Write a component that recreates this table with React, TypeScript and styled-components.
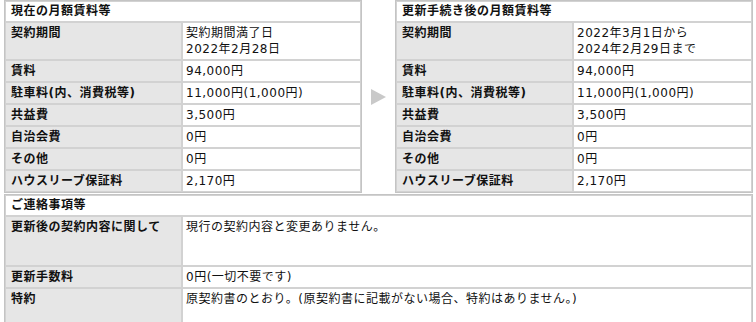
import React from 'react'
import styled, { createGlobalStyle } from 'styled-components'

const GlobalStyle = createGlobalStyle`
  html, body {
    margin: 0;
    padding: 0;
    background: #ffffff;
  }
  body {
    font-family: "DejaVu Sans", "Noto Sans CJK JP", sans-serif;
    font-size: 12px;
    color: #111111;
  }
`

const Page = styled.div`
  width: 756px;
  padding: 0 3px 0 4px;
  box-sizing: border-box;
  display: flex;
  flex-direction: column;
  gap: 1px;
`

const CompareRow = styled.div`
  display: flex;
  align-items: center;
  justify-content: space-between;
`

const Arrow = styled.div`
  width: 0;
  height: 0;
  border-top: 8px solid transparent;
  border-bottom: 8px solid transparent;
  border-left: 15px solid #c9c9c9;
  margin: 0 9px 0 9px;
`

const Table = styled.table<{ $width: string }>`
  width: ${p => p.$width};
  border-collapse: separate;
  border-spacing: 0;
  border: 1px solid #c4c4c4;
  table-layout: fixed;
`

const LabelCol = styled.col`
  width: 177px;
`

const HeadCell = styled.th`
  text-align: left;
  font-weight: 700;
  background: #ffffff;
  border: 1px solid #d2d2d2;
  padding: 1px 5px 2px;
  line-height: 16px;
  letter-spacing: 0.5px;
`

const LabelCell = styled.td<{ $tall?: number }>`
  background: #e6e6e6;
  font-weight: 700;
  border: 1px solid #d2d2d2;
  padding: 2px 5px;
  line-height: 16px;
  vertical-align: top;
  letter-spacing: 0.5px;
  height: ${p => (p.$tall ? `${p.$tall}px` : 'auto')};
`

const ValueCell = styled.td`
  background: #ffffff;
  border: 1px solid #d2d2d2;
  padding: 2px 3px;
  line-height: 16px;
  vertical-align: top;
  letter-spacing: 0.5px;
  white-space: nowrap;
`

type Item = { label: string; value: React.ReactNode }

const current: Item[] = [
  { label: '契約期間', value: <>契約期間満了日<br />2022年2月28日</> },
  { label: '賃料', value: '94,000円' },
  { label: '駐車料(内、消費税等)', value: '11,000円(1,000円)' },
  { label: '共益費', value: '3,500円' },
  { label: '自治会費', value: '0円' },
  { label: 'その他', value: '0円' },
  { label: 'ハウスリーブ保証料', value: '2,170円' },
]

const renewed: Item[] = [
  { label: '契約期間', value: <>2022年3月1日から<br />2024年2月29日まで</> },
  { label: '賃料', value: '94,000円' },
  { label: '駐車料(内、消費税等)', value: '11,000円(1,000円)' },
  { label: '共益費', value: '3,500円' },
  { label: '自治会費', value: '0円' },
  { label: 'その他', value: '0円' },
  { label: 'ハウスリーブ保証料', value: '2,170円' },
]

const RentTable = ({ title, items }: { title: string; items: Item[] }) => (
  <Table $width="360px">
    <colgroup>
      <LabelCol />
      <col />
    </colgroup>
    <thead>
      <tr>
        <HeadCell colSpan={2}>{title}</HeadCell>
      </tr>
    </thead>
    <tbody>
      {items.map(item => (
        <tr key={item.label}>
          <LabelCell>{item.label}</LabelCell>
          <ValueCell>{item.value}</ValueCell>
        </tr>
      ))}
    </tbody>
  </Table>
)

export default function App() {
  return (
    <>
      <GlobalStyle />
      <Page>
        <CompareRow>
          <RentTable title="現在の月額賃料等" items={current} />
          <Arrow />
          <RentTable title="更新手続き後の月額賃料等" items={renewed} />
        </CompareRow>
        <Table $width="100%">
          <colgroup>
            <LabelCol />
            <col />
          </colgroup>
          <thead>
            <tr>
              <HeadCell colSpan={2}>ご連絡事項等</HeadCell>
            </tr>
          </thead>
          <tbody>
            <tr>
              <LabelCell $tall={44}>更新後の契約内容に関して</LabelCell>
              <ValueCell>現行の契約内容と変更ありません。</ValueCell>
            </tr>
            <tr>
              <LabelCell>更新手数料</LabelCell>
              <ValueCell>0円(一切不要です)</ValueCell>
            </tr>
            <tr>
              <LabelCell $tall={44}>特約</LabelCell>
              <ValueCell>原契約書のとおり。(原契約書に記載がない場合、特約はありません。)</ValueCell>
            </tr>
          </tbody>
        </Table>
      </Page>
    </>
  )
}
